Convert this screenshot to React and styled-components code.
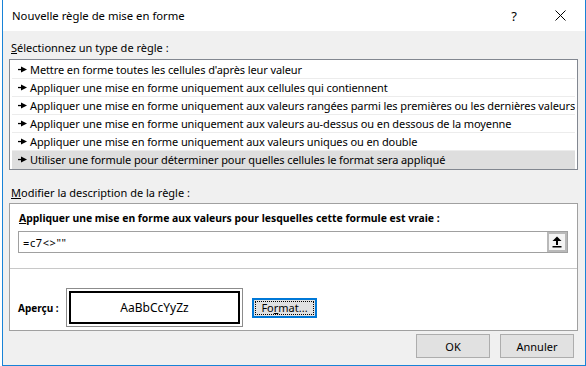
import React from 'react';
import styled, { createGlobalStyle } from 'styled-components';

const GlobalStyle = createGlobalStyle`
  html, body {
    margin: 0;
    padding: 0;
    background: #ffffff;
  }
  body {
    font-family: "Noto Sans", "Open Sans", sans-serif;
    font-size: 11px;
    color: #000;
  }
`;

const regles = [
  "Mettre en forme toutes les cellules d'après leur valeur",
  "Appliquer une mise en forme uniquement aux cellules qui contiennent",
  "Appliquer une mise en forme uniquement aux valeurs rangées parmi les premières ou les dernières valeurs",
  "Appliquer une mise en forme uniquement aux valeurs au-dessus ou en dessous de la moyenne",
  "Appliquer une mise en forme uniquement aux valeurs uniques ou en double",
  "Utiliser une formule pour déterminer pour quelles cellules le format sera appliqué",
];

function Fleche() {
  return (
    <svg width="9" height="7" viewBox="0 0 9 7" style={{ flex: 'none' }}>
      <rect x="0" y="2.9" width="4" height="1.3" fill="#000" />
      <polygon points="3,0.6 9,3.5 3,6.4" fill="#000" />
    </svg>
  );
}

function Croix() {
  return (
    <svg width="11" height="11" viewBox="0 0 11 11">
      <path d="M0.5 0.5 L10.5 10.5 M10.5 0.5 L0.5 10.5" stroke="#000" strokeWidth="1" fill="none" />
    </svg>
  );
}

function FlecheHaut() {
  return (
    <svg width="10" height="12" viewBox="0 0 10 12">
      <polygon points="5,0.5 9.5,5 0.5,5" fill="#000" />
      <rect x="4" y="4.5" width="2" height="4.5" fill="#000" />
      <rect x="0.5" y="10" width="9" height="1.5" fill="#000" />
    </svg>
  );
}

export default function App() {
  return (
    <>
      <GlobalStyle />
      <Page>
        <Dialog>
          <TitleBar>
            <Titre>Nouvelle règle de mise en forme</Titre>
            <TitleButton>?</TitleButton>
            <TitleButton><Croix /></TitleButton>
          </TitleBar>
          <Body>
            <Label><u>S</u>électionnez un type de règle :</Label>
            <Liste>
              {regles.map((r, i) => (
                <Ligne key={i} selected={i === regles.length - 1}>
                  <Fleche />
                  <span>{r}</span>
                </Ligne>
              ))}
            </Liste>
            <Label top={14}><u>M</u>odifier la description de la règle :</Label>
            <Panneau>
              <Gras><u>A</u>ppliquer une mise en forme aux valeurs pour lesquelles cette formule est vraie :</Gras>
              <Saisie>
                <Formule>=c7&lt;&gt;""</Formule>
                <Reduire><FlecheHaut /></Reduire>
              </Saisie>
              <Separateur />
              <ApercuLigne>
                <ApercuLabel>Aperçu :</ApercuLabel>
                <ApercuCadre>
                  <ApercuInterieur>AaBbCcYyZz</ApercuInterieur>
                </ApercuCadre>
                <FormatBouton>
                  <FocusRect>Fo<u>r</u>mat...</FocusRect>
                </FormatBouton>
              </ApercuLigne>
            </Panneau>
            <Boutons>
              <Bouton>OK</Bouton>
              <Bouton>Annuler</Bouton>
            </Boutons>
          </Body>
        </Dialog>
      </Page>
    </>
  );
}

const Page = styled.div`
  display: flex;
  padding-left: 2px;
`;

const Dialog = styled.div`
  width: 584px;
  height: 366px;
  box-sizing: border-box;
  border: 1px solid #1883d7;
  border-top: none;
  display: flex;
  flex-direction: column;
  background: #f0f0f0;
`;

const TitleBar = styled.div`
  height: 31px;
  flex: none;
  background: #ffffff;
  display: flex;
  align-items: center;
  padding: 0 2px 0 9px;
`;

const Titre = styled.div`
  flex: 1;
  font-size: 11.3px;
  color: #000;
  padding-bottom: 1px;
`;

const TitleButton = styled.div`
  width: 46px;
  height: 31px;
  display: flex;
  align-items: center;
  justify-content: center;
  font-size: 13px;
`;

const Body = styled.div`
  flex: 1;
  display: flex;
  flex-direction: column;
  padding: 0 7px 0 6px;
`;

const Label = styled.div`
  height: 18px;
  line-height: 18px;
  margin-top: ${p => p.top ?? 8}px;
  padding-left: 2px;
  white-space: nowrap;
`;

const Liste = styled.div`
  margin-top: 2px;
  background: #fff;
  border: 1px solid #828790;
  padding: 1px 2px 0;
  box-sizing: border-box;
  height: 111px;
`;

const Ligne = styled.div`
  height: 18px;
  box-sizing: border-box;
  display: flex;
  align-items: center;
  gap: 3px;
  padding-left: 6px;
  white-space: nowrap;
  overflow: hidden;
  letter-spacing: -0.1px;
  border-bottom: 1px solid ${p => (p.selected ? '#dedede' : '#ececec')};
  background: ${p => (p.selected ? '#dedede' : 'transparent')};
`;

const Panneau = styled.div`
  margin-top: 1px;
  height: 128px;
  box-sizing: border-box;
  background: #fff;
  border: 1px solid #a0a0a0;
  padding: 5px 0 0 8px;
  display: flex;
  flex-direction: column;
`;

const Gras = styled.div`
  height: 18px;
  line-height: 18px;
  font-weight: bold;
  font-size: 10.4px;
  padding-left: 1px;
  white-space: nowrap;
`;

const Saisie = styled.div`
  margin-top: 4px;
  width: 550px;
  height: 22px;
  box-sizing: border-box;
  border: 1px solid #a0a0a0;
  display: flex;
  align-items: center;
`;

const Formule = styled.div`
  flex: 1;
  padding-left: 4px;
  font-size: 11px;
  letter-spacing: 0.6px;
`;

const Reduire = styled.div`
  width: 20px;
  height: 20px;
  box-sizing: border-box;
  border: 2px solid #b9b9b9;
  background: #f4f4f4;
  display: flex;
  align-items: center;
  justify-content: center;
`;

const Separateur = styled.div`
  margin: 15px 0 0 -8px;
  height: 1px;
  background: #c8c8c8;
`;

const ApercuLigne = styled.div`
  display: flex;
  align-items: center;
  margin-top: 19px;
`;

const ApercuLabel = styled.div`
  width: 48px;
  font-weight: bold;
  font-size: 10px;
`;

const ApercuCadre = styled.div`
  width: 177px;
  height: 39px;
  box-sizing: border-box;
  border: 1px solid #8c8c8c;
  padding: 2px;
  background: #fff;
`;

const ApercuInterieur = styled.div`
  height: 100%;
  box-sizing: border-box;
  border: 2px solid #000;
  display: flex;
  align-items: center;
  justify-content: center;
  font-size: 12px;
`;

const FormatBouton = styled.div`
  margin-left: 9px;
  width: 65px;
  height: 20px;
  box-sizing: border-box;
  border: 2px solid #0078d7;
  background: #e1e1e1;
  padding: 1px;
`;

const FocusRect = styled.div`
  height: 100%;
  box-sizing: border-box;
  border: 1px dotted #000;
  display: flex;
  align-items: center;
  justify-content: center;
  font-size: 11px;
`;

const Boutons = styled.div`
  display: flex;
  justify-content: flex-end;
  gap: 10px;
  margin-top: 3px;
  padding-right: 4px;
`;

const Bouton = styled.div`
  width: 74px;
  height: 24px;
  box-sizing: border-box;
  border: 1px solid #adadad;
  background: #e1e1e1;
  display: flex;
  align-items: center;
  justify-content: center;
`;
